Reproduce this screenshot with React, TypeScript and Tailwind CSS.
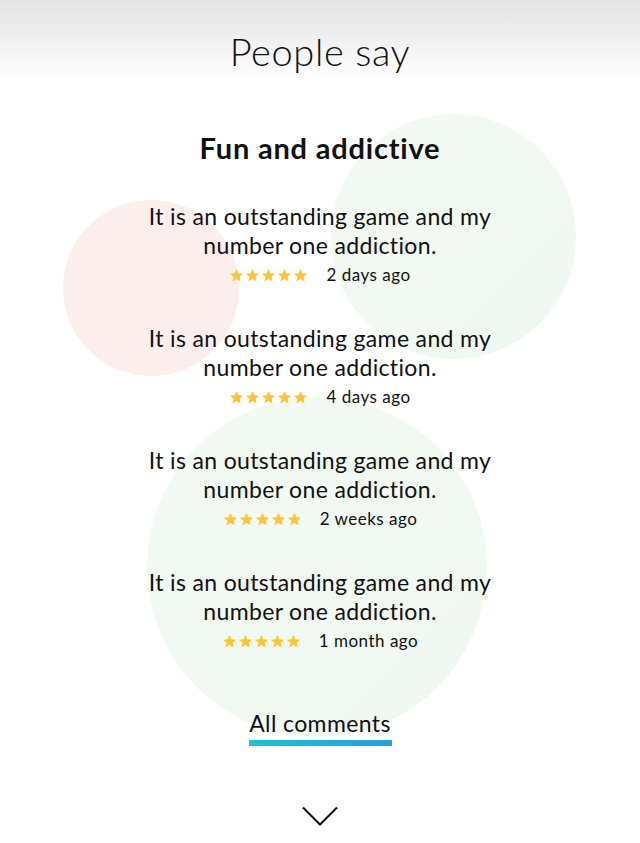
import React from "react";

const Star = () => (
  <svg width="15" height="15" viewBox="0 0 24 24" className="block">
    <path
      d="M12 1.5l3.09 6.86 7.41.73-5.6 4.98 1.64 7.33L12 17.6l-6.54 3.8 1.64-7.33-5.6-4.98 7.41-.73z"
      fill="#fdc52f"
    />
  </svg>
);

const reviews = ["2 days ago", "4 days ago", "2 weeks ago", "1 month ago"];

export default function App() {
  return (
    <div
      className="relative w-[640px] h-[843px] overflow-hidden bg-white text-[#111]"
      style={{ fontFamily: "Lato, 'Open Sans', sans-serif" }}
    >
      <div className="absolute left-[63px] top-[200px] w-[176px] h-[176px] rounded-full bg-[#fdeeee]" />
      <div className="absolute left-[331px] top-[114px] w-[245px] h-[245px] rounded-full bg-gradient-to-br from-[#f3faf3] to-[#eff8f0]" />
      <div className="absolute left-[147px] top-[397px] w-[340px] h-[340px] rounded-full bg-gradient-to-br from-[#f4faf4] to-[#eff8f0]" />

      <div className="relative flex flex-col items-center">
        <div className="w-full h-[80px] bg-gradient-to-b from-[#e3e3e3] to-white flex justify-center pt-[27px]">
          <h1 className="text-[38px] leading-[48px] font-light tracking-[0.6px]">People say</h1>
        </div>
        <h2 className="mt-[48px] text-[29px] leading-[40px] font-bold tracking-[0.8px]">Fun and addictive</h2>
        <div className="mt-[34px] flex flex-col items-center gap-[35px]">
          {reviews.map((r) => (
            <div key={r} className="flex flex-col items-center">
              <p className="text-[23px] leading-[29px] tracking-[0.35px] text-center w-[380px]">
                It is an outstanding game and my number one addiction.
              </p>
              <div className="flex items-center gap-[18px] h-[29px] pt-[1px]">
                <div className="flex gap-[1px]">
                  <Star />
                  <Star />
                  <Star />
                  <Star />
                  <Star />
                </div>
                <span className="text-[17px] leading-[20px] tracking-[0.5px]">{r}</span>
              </div>
            </div>
          ))}
        </div>
        <div className="mt-[54px] flex flex-col items-center">
          <span className="text-[23px] leading-[28px] tracking-[0.4px] px-[3px]">All comments</span>
          <div className="mt-[3px] w-[143px] h-[6px] bg-gradient-to-r from-[#1cc3d6] to-[#2a9fd8]" />
        </div>
        <svg width="36" height="20" viewBox="0 0 36 20" className="mt-[60px]">
          <path d="M1 1.5l17 17 17-17" fill="none" stroke="#111" strokeWidth="2" />
        </svg>
      </div>
    </div>
  );
}
